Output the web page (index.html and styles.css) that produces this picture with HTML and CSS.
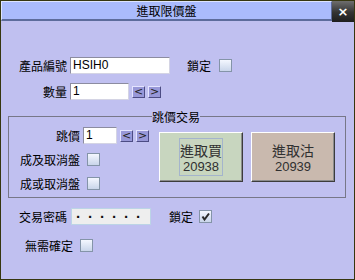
FILE: index.html
```html
<!DOCTYPE html>
<html lang="zh-Hant">
<head>
  <meta charset="UTF-8">
  <title>進取限價盤</title>
  <link rel="stylesheet" href="styles.css">
</head>
<body>
  <div class="window">
    <div class="titlebar">
      <div class="title">進取限價盤</div>
      <div class="close">×</div>
    </div>

    <div class="content">
      <div class="row row-code">
        <span class="lbl lbl-main">產品編號</span>
        <div class="field field-code">HSIH0</div>
        <span class="lbl lock">鎖定</span>
        <span class="check"></span>
      </div>

      <div class="row row-qty">
        <span class="lbl lbl-main">數量</span>
        <div class="field field-qty">1</div>
        <span class="spin">&lt;</span>
        <span class="spin">&gt;</span>
      </div>

      <fieldset class="group">
        <legend>跳價交易</legend>
        <div class="group-body">
          <div class="group-left">
            <div class="row">
              <span class="lbl lbl-group">跳價</span>
              <div class="field field-tick">1</div>
              <span class="spin">&lt;</span>
              <span class="spin">&gt;</span>
            </div>
            <div class="row row-opt">
              <span class="lbl lbl-group">成及取消盤</span>
              <span class="check check-opt"></span>
            </div>
            <div class="row row-opt">
              <span class="lbl lbl-group">成或取消盤</span>
              <span class="check check-opt"></span>
            </div>
          </div>
          <button class="order buy"><span class="focus">進取買<br><b>20938</b></span></button>
          <button class="order sell"><span class="nofocus">進取沽<br><b>20939</b></span></button>
        </div>
      </fieldset>

      <div class="row row-pass">
        <span class="lbl lbl-main">交易密碼</span>
        <div class="field field-pass">······</div>
        <span class="lbl lock-pass">鎖定</span>
        <span class="check checked">
          <svg width="11" height="11" viewBox="0 0 11 11"><path d="M2.5 5.5 L4.5 8.5 L9 2.5" fill="none" stroke="#2a2a2a" stroke-width="2"/></svg>
        </span>
      </div>

      <div class="row row-confirm">
        <span class="lbl lbl-confirm">無需確定</span>
        <span class="check check-opt"></span>
      </div>
    </div>
  </div>
</body>
</html>
```

FILE: styles.css
```css
body { margin: 0; font-family: "Noto Sans CJK TC", "Liberation Sans", sans-serif; font-size: 12px; color: #000; }
.window { width: 355px; height: 280px; box-sizing: border-box; border: 1px solid #36360f; background: #c0c0f0; overflow: hidden; }

/* title bar */
.titlebar { display: flex; height: 20px; align-items: flex-start; }
.title { flex: 1; height: 20px; box-sizing: border-box; background: #aabbfc; border-top: 1px solid #dde4ff; border-left: 1px solid #dde4ff; border-right: 1px solid #5d6c9c; border-bottom: 2px solid #5d6c9c; text-align: center; line-height: 17px; }
.close { width: 22px; height: 21px; background: linear-gradient(#6e6e6e, #333 55%, #1e1e1e); color: #fff; text-align: center; font: bold 13px "DejaVu Sans", sans-serif; line-height: 21px; }

/* rows */
.content { padding-top: 36px; }
.row { display: flex; align-items: center; }
.lbl { line-height: 17px; white-space: nowrap; }
.lbl-main { width: 66px; text-align: right; }
.row-qty { margin-top: 9px; }
.field { box-sizing: border-box; height: 17px; background: #fff; border: 1px solid; border-color: #8c8ca0 #d4d4e4 #d4d4e4 #8c8ca0; padding: 0 2px; line-height: 15px; font-family: "Liberation Sans", sans-serif; font-size: 12px; }
.field-code { width: 100px; margin-left: 3px; }
.field-qty { width: 59px; margin-left: 3px; }
.field-tick { width: 34px; margin-left: 3px; }
.lock { margin-left: 17px; }

.spin { box-sizing: border-box; width: 13px; height: 12px; margin-left: 3px; background: #9898d8; border: 1px solid; border-color: #e4e4ff #4c4c84 #4c4c84 #e4e4ff; font: 11px "DejaVu Sans", sans-serif; line-height: 9px; text-align: center; color: #222; }

.check { box-sizing: border-box; width: 13px; height: 13px; margin-left: 8px; border: 1px solid #8494a8; background: linear-gradient(#f4f7ff, #c9d5ea); display: flex; align-items: center; justify-content: center; }
.check-opt { margin-left: 7px; }

/* jump price group */
.group { margin: 9px 0 0 7px; width: 338px; box-sizing: border-box; padding: 3px 0 5px 0; border: 1px solid #777788; }
.group legend { margin-left: 143px; padding: 0; line-height: 15px; }
.group-body { display: flex; align-items: flex-start; }
.group-left { width: 150px; }
.lbl-group { width: 71px; text-align: right; }
.row-opt { margin-top: 7px; }

.order { box-sizing: border-box; width: 84px; height: 50px; margin-top: 5px; padding: 0; border: 1px solid; border-color: #fff #3c3c3c #3c3c3c #fff; box-shadow: inset -1px -1px #8c8c8c; font-family: "Noto Sans CJK TC", sans-serif; font-size: 14px; line-height: 18px; color: #303030; display: flex; align-items: center; justify-content: center; }
.order b { font: 13px "Liberation Sans", sans-serif; }
.buy { background: #c8d6bf; }
.sell { background: #c9b9ae; margin-left: 8px; }
.focus { box-sizing: border-box; width: 44px; height: 38px; border: 1px solid #a4b4cc; display: flex; flex-direction: column; justify-content: center; }
.nofocus { display: flex; flex-direction: column; }

/* password and confirm */
.row-pass { margin-top: 10px; }
.field-pass { width: 80px; margin-left: 4px; background: #eeeeee; border-color: #bcd4e6; padding-left: 4px; font-size: 15px; font-weight: bold; letter-spacing: 7px; line-height: 15px; color: #111; }
.lock-pass { margin-left: 18px; }
.checked { margin-left: 6px; }
.row-confirm { margin-top: 12px; }
.lbl-confirm { margin-left: 24px; }
```
